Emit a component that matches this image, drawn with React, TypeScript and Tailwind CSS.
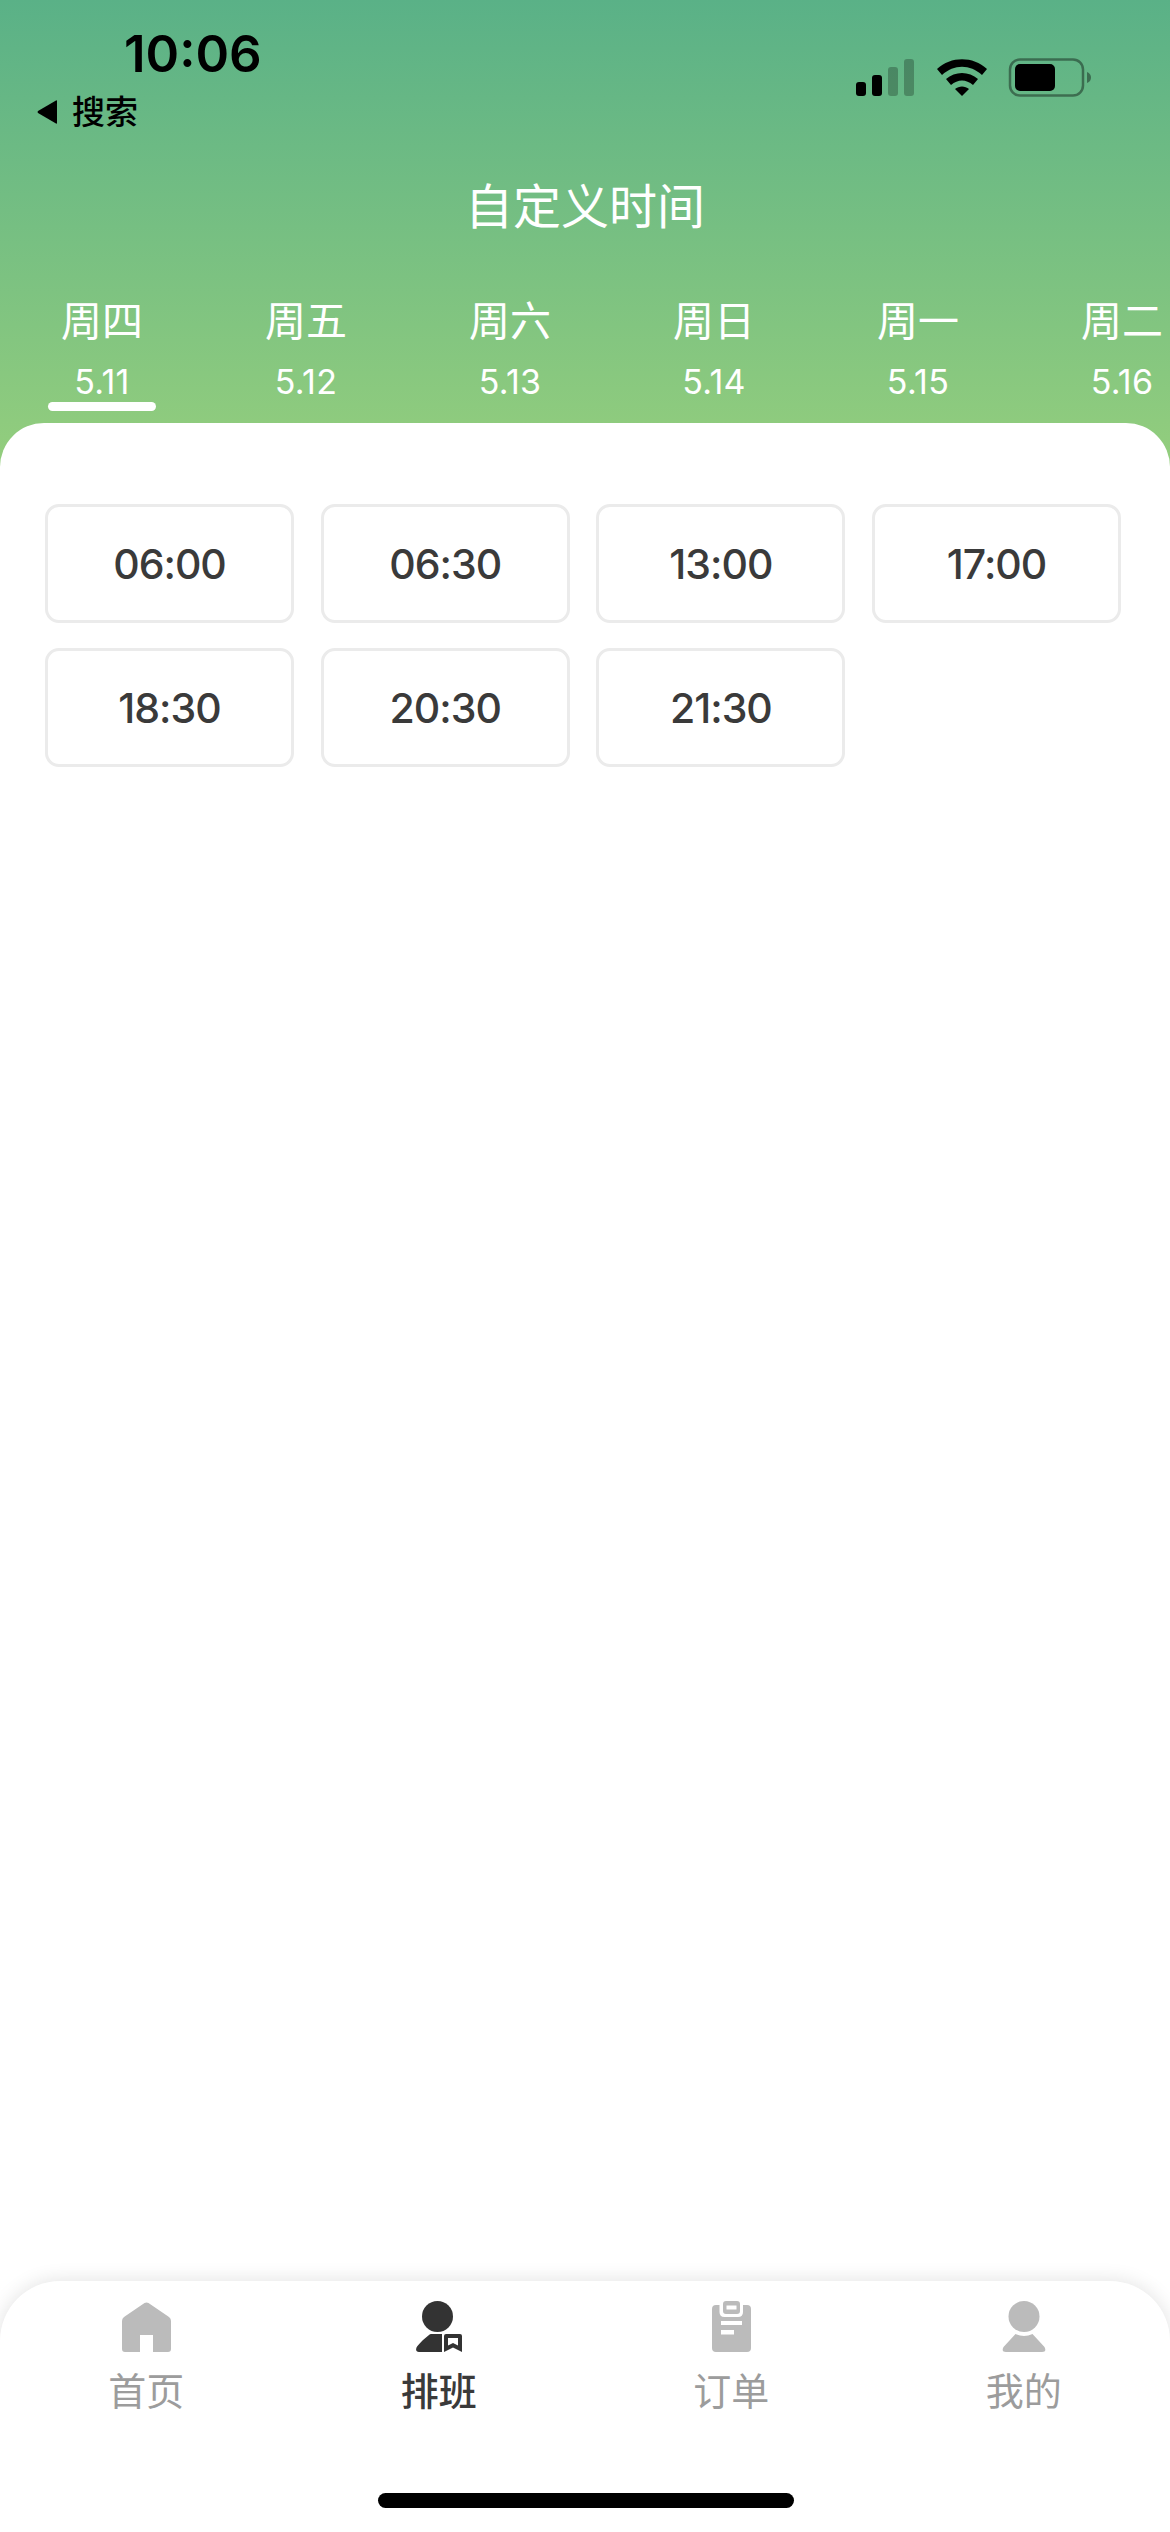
const cjk = "font-['Inter','Noto_Sans_CJK_SC',sans-serif]"

const days = [
  { name: "周四", date: "5.11", active: true },
  { name: "周五", date: "5.12" },
  { name: "周六", date: "5.13" },
  { name: "周日", date: "5.14" },
  { name: "周一", date: "5.15" },
  { name: "周二", date: "5.16" },
]

const times = ["06:00", "06:30", "13:00", "17:00", "18:30", "20:30", "21:30"]

function StatusIcons() {
  return (
    <svg width="236" height="40" viewBox="0 0 236 40" className="block" aria-hidden="true">
      <rect x="0" y="24" width="10" height="14" rx="3" fill="#000" />
      <rect x="16" y="17" width="10" height="21" rx="3" fill="#000" />
      <rect x="32" y="9" width="10" height="29" rx="3" fill="#000" opacity="0.25" />
      <rect x="48" y="1" width="10" height="37" rx="3" fill="#000" opacity="0.25" />
      <path d="M81 11C95 -2 117 -2 131 11L126 17C114 6 98 6 86 17Z" fill="#000" />
      <path d="M90 21C99 13 113 13 122 21L117 27C110 21 102 21 95 27Z" fill="#000" />
      <path d="M99 31C103 27.5 109 27.5 113 31L106 38Z" fill="#000" />
      <rect x="154" y="1.5" width="73" height="36" rx="10" fill="none" stroke="#000" strokeOpacity="0.4" strokeWidth="2.5" />
      <rect x="159" y="6" width="40" height="27" rx="5" fill="#000" />
      <path d="M231 14C234 15 235 17.5 235 19.5C235 21.5 234 24 231 25Z" fill="#000" opacity="0.4" />
    </svg>
  )
}

function HomeIcon() {
  return (
    <svg width="49" height="50" viewBox="0 0 49 50" aria-hidden="true">
      <path
        d="M22.5 1 L2 15 Q0 16.5 0 19 V47 Q0 50 3 50 H18 V33 H31 V50 H46 Q49 50 49 47 V19 Q49 16.5 47 15 L26.5 1 Q24.5 0 22.5 1Z"
        fill="#bbbbbb"
      />
    </svg>
  )
}

function ScheduleIcon() {
  return (
    <svg width="46" height="51" viewBox="0 0 46 51" aria-hidden="true">
      <circle cx="21.5" cy="15.5" r="15.5" fill="#333" />
      <path d="M13 34 Q14 33 15 33 H26 V51 H3 Q-1 51 0.5 46.5 Q2 44 7 39Z" fill="#333" />
      <path
        fillRule="evenodd"
        d="M30 33 H44 Q46 33 46 35 V51 L37 46.5 L28 51 V35 Q28 33 30 33Z M32 37 V44.5 L37 42 L42 44.5 V37Z"
        fill="#333"
      />
    </svg>
  )
}

function OrderIcon() {
  return (
    <svg width="39" height="51" viewBox="0 0 39 51" aria-hidden="true">
      <path
        fillRule="evenodd"
        d="M11 3 Q11 0 14 0 H25 Q28 0 28 3 V10 Q28 13 25 13 H14 Q11 13 11 10Z M14.5 4.5 V8.5 H24.5 V4.5Z"
        fill="#bbbbbb"
      />
      <path
        fillRule="evenodd"
        d="M7.5 4 V11 Q7.5 16 12.5 16 H26 Q31 16 31 11 V4 H35 Q39 4 39 8 V47 Q39 51 35 51 H4 Q0 51 0 47 V8 Q0 4 4 4Z M9 20 V24 H30 V20Z M9 29 V33.5 H22 V29Z"
        fill="#bbbbbb"
      />
    </svg>
  )
}

function MineIcon() {
  return (
    <svg width="44" height="51" viewBox="0 0 44 51" aria-hidden="true">
      <circle cx="22" cy="15.5" r="15.5" fill="#bbbbbb" />
      <path d="M13.5 33 Q22 37 30.5 33 L42.5 46 Q45 51 40 51 H4 Q-1 51 1.5 46Z" fill="#bbbbbb" />
    </svg>
  )
}

const tabs = [
  { label: "首页", icon: <HomeIcon />, active: false },
  { label: "排班", icon: <ScheduleIcon />, active: true },
  { label: "订单", icon: <OrderIcon />, active: false },
  { label: "我的", icon: <MineIcon />, active: false },
]

export default function App() {
  return (
    <div className={`${cjk} relative flex h-[2532px] w-[1170px] flex-col overflow-hidden bg-white`}>
      {/* Green header */}
      <div className="h-[470px] w-full shrink-0 bg-[linear-gradient(180deg,#5ab187_0%,#94ce7d_100%)]">
        <div className="flex h-[96px] items-start justify-between pl-[37px] pr-[78px]">
          <div>
            <div className="ml-[87px] mt-[30px] text-[51px] leading-[48px] font-semibold text-black">
              10:06
            </div>
            <div className="mt-[14px] flex items-center gap-[14px] text-[33px] leading-[40px] font-medium text-black">
              <svg width="21" height="24" viewBox="0 0 21 24" aria-hidden="true">
                <path d="M20 1 V23 Q20 24 19 23.5 L1 13 Q0 12 1 11 L19 0.5 Q20 0 20 1Z" fill="#000" />
              </svg>
              搜索
            </div>
          </div>
          <div className="mt-[58px]">
            <StatusIcons />
          </div>
        </div>
        <h1 className="mt-[81px] text-center text-[48px] leading-[60px] font-normal text-white">自定义时间</h1>
        <div className="mt-[58px] flex w-[1300px]">
          {days.map((d) => (
            <div key={d.date} className="flex w-[204px] shrink-0 flex-col items-center text-white">
              <div className="text-[41px] leading-[52px]">{d.name}</div>
              <div className="mt-[15px] text-[34px] leading-[40px] tracking-[0.3px]">{d.date}</div>
              {d.active && <div className="h-[9px] w-[108px] rounded-full bg-white" />}
            </div>
          ))}
        </div>
      </div>

      {/* Time slots */}
      <div className="relative -mt-[47px] flex-1 rounded-t-[44px] bg-white pt-[81px] pl-[45px] pr-[45px]">
        <div className="grid grid-cols-[repeat(4,249px)] gap-x-[26.7px] gap-y-[25px]">
          {times.map((t) => (
            <div
              key={t}
              className="flex h-[119px] items-center justify-center rounded-[14px] border-[3px] border-[#ebebeb] pt-[2px] text-[41px] font-medium tracking-[-1px] text-[#3a3a3a]"
            >
              {t}
            </div>
          ))}
        </div>
      </div>

      {/* Tab bar */}
      <div className="absolute bottom-0 left-0 h-[251px] w-full rounded-t-[60px] bg-white shadow-[0_0_20px_rgba(0,0,0,0.12)]">
        <div className="grid grid-cols-4 pt-[19px]">
          {tabs.map((tab) => (
            <div key={tab.label} className="flex flex-col items-center">
              <div className="flex h-[52px] items-end">{tab.icon}</div>
              <div
                className={`mt-[16px] text-[38px] leading-[46px] ${tab.active ? "font-medium text-[#3a3a3a]" : "text-[#9c9c9c]"}`}
              >
                {tab.label}
              </div>
            </div>
          ))}
        </div>
        <div className="absolute bottom-[24px] left-[378px] h-[15px] w-[416px] rounded-full bg-black" />
      </div>
    </div>
  )
}
